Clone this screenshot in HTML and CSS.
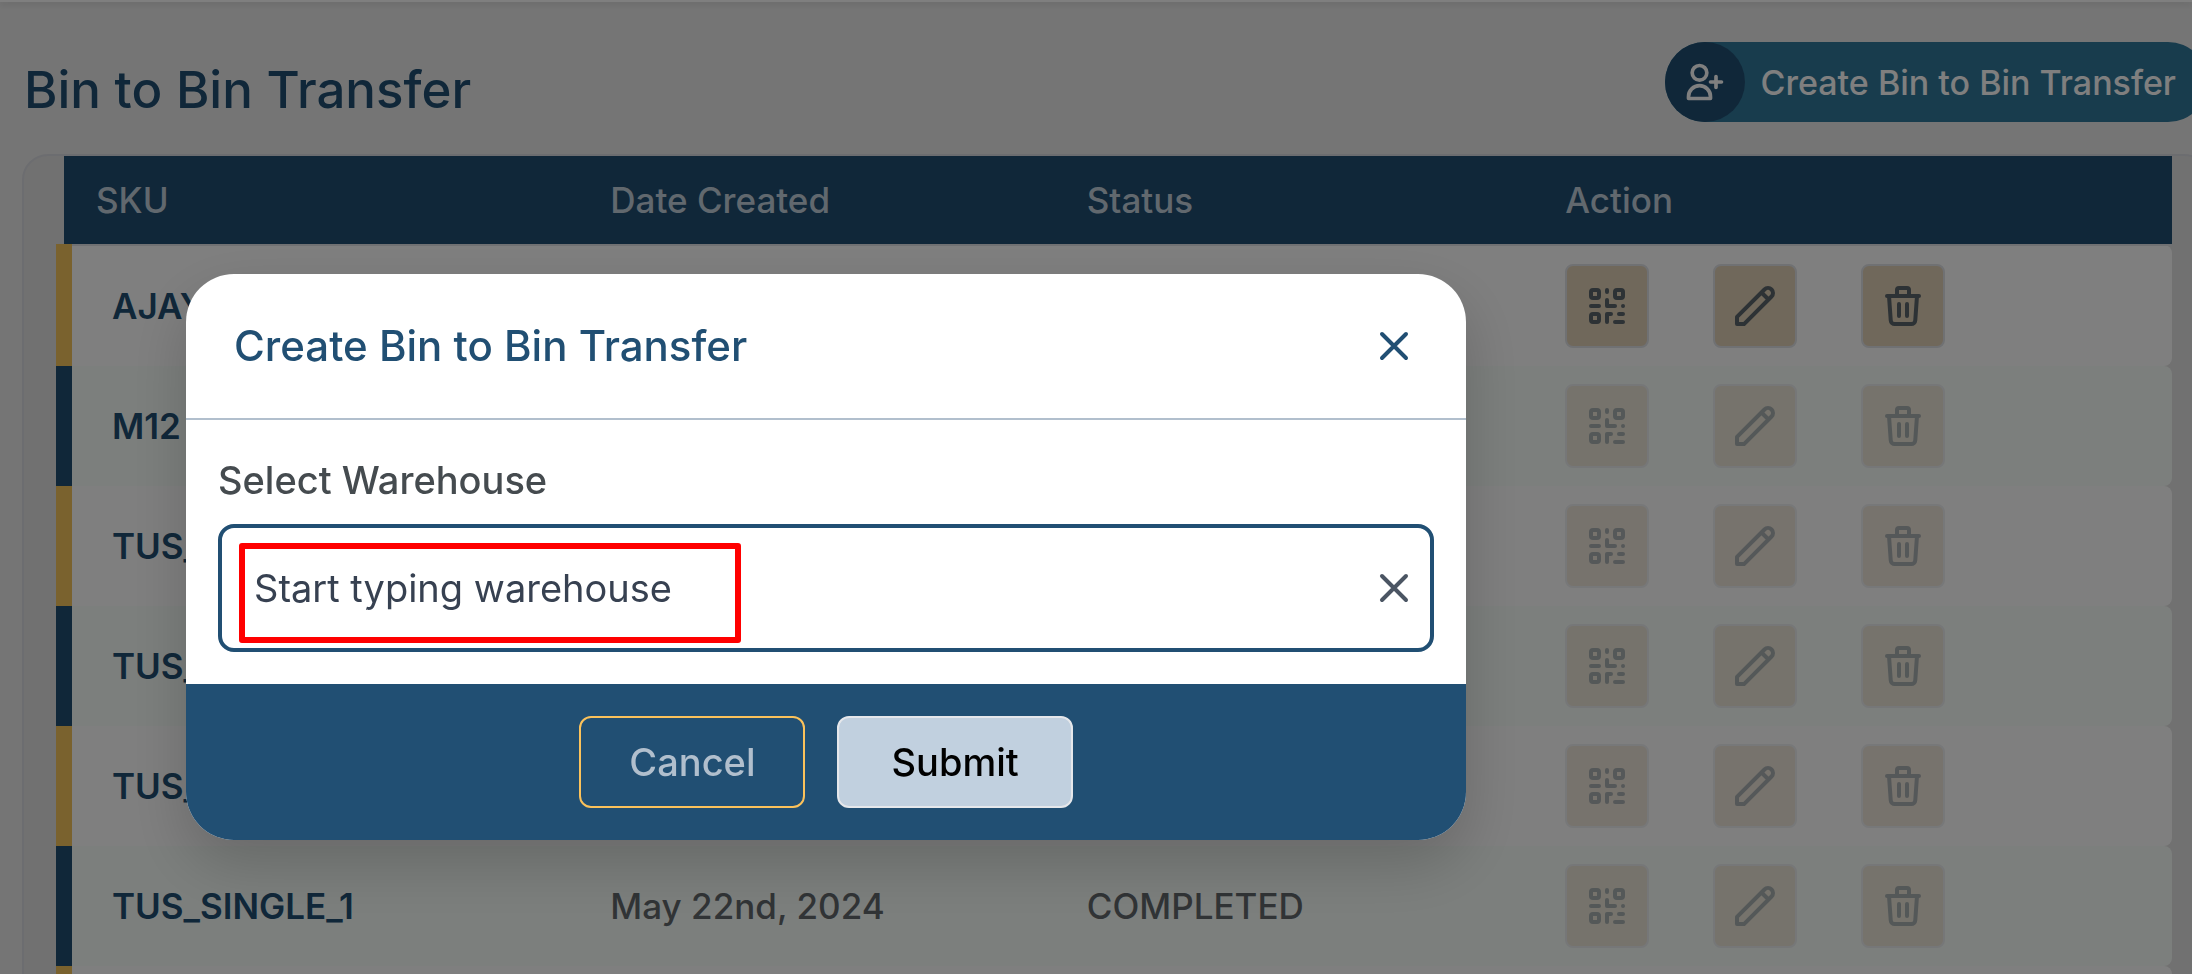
FILE: index.html
```
<!DOCTYPE html>
<html lang="en">

<head>
  <meta charset="UTF-8">
  <meta name="viewport" content="width=device-width, initial-scale=1.0">
  <title>Bin to Bin Transfer</title>
  <link rel="stylesheet" href="styles.css">
</head>

<body>

  <!-- icon set -->
  <svg class="sprite" aria-hidden="true">
    <symbol id="qr" viewBox="0 0 24 24">
      <path d="M12 4v1m6 11h2m-6 0h-2v4m0-11v3m0 0h.01M12 12h4.01M16 20h4M4 12h4m12 0h.01M5 8h2a1 1 0 001-1V5a1 1 0 00-1-1H5a1 1 0 00-1 1v2a1 1 0 001 1zm12 0h2a1 1 0 001-1V5a1 1 0 00-1-1h-2a1 1 0 00-1 1v2a1 1 0 001 1zM5 20h2a1 1 0 001-1v-2a1 1 0 00-1-1H5a1 1 0 00-1 1v2a1 1 0 001 1z" />
    </symbol>
    <symbol id="pencil" viewBox="0 0 24 24">
      <path d="M15.232 5.232l3.536 3.536m-2.036-5.036a2.5 2.5 0 113.536 3.536L6.5 21.036H3v-3.572L16.732 3.732z" />
    </symbol>
    <symbol id="trash" viewBox="0 0 24 24">
      <path d="M19 7l-.867 12.142A2 2 0 0116.138 21H7.862a2 2 0 01-1.995-1.858L5 7m5 4v6m4-6v6m1-10V4a1 1 0 00-1-1h-4a1 1 0 00-1 1v3M4 7h16" />
    </symbol>
    <symbol id="close" viewBox="0 0 24 24">
      <path d="M6 18L18 6M6 6l12 12" />
    </symbol>
  </svg>

  <div class="topbar"></div>

  <main class="content">
    <div class="page-head">
      <h1>Bin to Bin Transfer</h1>
      <button class="create" type="button">
        <span class="create-icon">
          <svg viewBox="0 0 24 24"><path d="M18 9v3m0 0v3m0-3h3m-3 0h-3m-2-5a4 4 0 11-8 0 4 4 0 018 0zM3 20a6 6 0 0112 0v1H3v-1z" /></svg>
        </span>
        Create Bin to Bin Transfer
      </button>
    </div>

    <div class="card">
      <table>
        <colgroup>
          <col class="col-sku">
          <col class="col-date">
          <col class="col-status">
          <col>
        </colgroup>
        <thead>
          <tr>
            <th>SKU</th>
            <th>Date Created</th>
            <th>Status</th>
            <th>Action</th>
          </tr>
        </thead>
        <tbody>
          <tr>
            <td class="sku">AJAY</td>
            <td></td>
            <td></td>
            <td>
              <div class="actions">
                <button type="button" aria-label="QR code"><svg><use href="#qr" /></svg></button>
                <button type="button" aria-label="Edit"><svg><use href="#pencil" /></svg></button>
                <button type="button" aria-label="Delete"><svg><use href="#trash" /></svg></button>
              </div>
            </td>
          </tr>
          <tr>
            <td class="sku">M12</td>
            <td></td>
            <td></td>
            <td>
              <div class="actions">
                <button type="button" aria-label="QR code" disabled><svg><use href="#qr" /></svg></button>
                <button type="button" aria-label="Edit" disabled><svg><use href="#pencil" /></svg></button>
                <button type="button" aria-label="Delete" disabled><svg><use href="#trash" /></svg></button>
              </div>
            </td>
          </tr>
          <tr>
            <td class="sku">TUS_</td>
            <td></td>
            <td></td>
            <td>
              <div class="actions">
                <button type="button" aria-label="QR code" disabled><svg><use href="#qr" /></svg></button>
                <button type="button" aria-label="Edit" disabled><svg><use href="#pencil" /></svg></button>
                <button type="button" aria-label="Delete" disabled><svg><use href="#trash" /></svg></button>
              </div>
            </td>
          </tr>
          <tr>
            <td class="sku">TUS_</td>
            <td></td>
            <td></td>
            <td>
              <div class="actions">
                <button type="button" aria-label="QR code" disabled><svg><use href="#qr" /></svg></button>
                <button type="button" aria-label="Edit" disabled><svg><use href="#pencil" /></svg></button>
                <button type="button" aria-label="Delete" disabled><svg><use href="#trash" /></svg></button>
              </div>
            </td>
          </tr>
          <tr>
            <td class="sku">TUS_</td>
            <td></td>
            <td></td>
            <td>
              <div class="actions">
                <button type="button" aria-label="QR code" disabled><svg><use href="#qr" /></svg></button>
                <button type="button" aria-label="Edit" disabled><svg><use href="#pencil" /></svg></button>
                <button type="button" aria-label="Delete" disabled><svg><use href="#trash" /></svg></button>
              </div>
            </td>
          </tr>
          <tr>
            <td class="sku">TUS_SINGLE_1</td>
            <td>May 22nd, 2024</td>
            <td>COMPLETED</td>
            <td>
              <div class="actions">
                <button type="button" aria-label="QR code" disabled><svg><use href="#qr" /></svg></button>
                <button type="button" aria-label="Edit" disabled><svg><use href="#pencil" /></svg></button>
                <button type="button" aria-label="Delete" disabled><svg><use href="#trash" /></svg></button>
              </div>
            </td>
          </tr>
          <tr>
            <td></td>
            <td></td>
            <td></td>
            <td></td>
          </tr>
        </tbody>
      </table>
    </div>
  </main>

  <!-- create dialog -->
  <div class="overlay">
    <form class="modal" role="dialog" aria-labelledby="modal-title">
      <div class="modal-head">
        <h2 id="modal-title">Create Bin to Bin Transfer</h2>
        <button type="button" aria-label="Close"><svg><use href="#close" /></svg></button>
      </div>
      <div class="modal-body">
        <label for="warehouse">Select Warehouse</label>
        <div class="field">
          <input id="warehouse" type="text" placeholder="Start typing warehouse">
          <button class="clear" type="button" aria-label="Clear"><svg><use href="#close" /></svg></button>
          <span class="highlight"></span>
        </div>
      </div>
      <div class="modal-foot">
        <button class="btn cancel" type="button">Cancel</button>
        <button class="btn submit" type="submit">Submit</button>
      </div>
    </form>
  </div>

</body>

</html>
```
FILE: styles.css
```
* {
  margin: 0;
  padding: 0;
  box-sizing: border-box;
}

html {
  overflow: hidden;
}

body {
  height: 100vh;
  overflow: hidden;
  background-color: #ebebeb;
  font-family: Inter, "Open Sans", sans-serif;
  font-weight: 500;
  color: #62686c;
}

button,
input {
  font: inherit;
  color: inherit;
}

button {
  border: none;
  background: none;
  cursor: pointer;
}

svg {
  display: block;
  width: 48px;
  height: 48px;
  fill: none;
  stroke: currentColor;
  stroke-width: 2;
  stroke-linecap: round;
  stroke-linejoin: round;
}

.sprite {
  display: none;
}

.topbar {
  height: 2px;
  background-color: #fff;
  box-shadow: 0 2px 6px rgba(0, 0, 0, .2);
}

/* the content runs a little past the right edge */
.content {
  margin: 40px -16px 0 24px;
}

.page-head {
  display: flex;
  justify-content: space-between;
  align-items: flex-end;
  margin-bottom: 32px;
}

h1 {
  font-size: 51px;
  line-height: 64px;
  font-weight: 500;
  color: #214f73;
}

.create {
  display: flex;
  align-items: center;
  gap: 16px;
  padding-right: 32px;
  border-radius: 40px;
  background-color: #30789a;
  font-size: 34px;
  color: #fff;
}

.create-icon {
  display: flex;
  align-items: center;
  justify-content: center;
  width: 80px;
  height: 80px;
  border-radius: 50%;
  background-color: #214f73;
}

.create-icon svg {
  width: 44px;
  height: 44px;
}

/* table card */
.card {
  margin: 0 -2px;
  padding: 0 36px 0 32px;
  border: 2px solid #d9dae0;
  border-radius: 26px;
  background-color: #e2e2e2;
}

table {
  width: 100%;
  table-layout: fixed;
  border-collapse: collapse;
  font-size: 35px;
  line-height: 48px;
  text-align: left;
  white-space: nowrap;
}

.col-sku {
  width: 24.4%;
}

.col-date {
  width: 22.6%;
}

.col-status {
  width: 22.7%;
}

thead tr {
  background-color: #214f73;
}

th {
  height: 89px;
  padding: 0 32px;
  font-weight: 500;
  color: #c3d1dd;
}

tbody tr {
  border-left: 16px solid #214f73;
}

tbody tr:nth-child(odd) {
  border-left-color: #f4c45c;
}

tbody tr:first-child {
  border-top: 2px solid #e0e2e6;
}

td {
  height: 120px;
  padding: 18px 32px;
  background-color: #f9fefb;
}

tr:nth-child(odd) td {
  background-color: #fff;
}

td:last-child {
  border-radius: 0 8px 8px 0;
}

td.sku {
  padding-left: 40px;
  font-weight: 600;
  color: #214f73;
}

.actions {
  display: flex;
  gap: 64px;
}

.actions button {
  padding: 16px;
  border: 2px solid #e0e2e6;
  border-radius: 8px;
  background-color: #e0d0b6;
  color: #5a646a;
}

.actions button:disabled {
  opacity: .5;
  cursor: default;
}

/* modal */
.overlay {
  position: fixed;
  inset: 0;
  padding: 274px 186px 0;
  background-color: rgba(0, 0, 0, .5);
}

.modal {
  max-width: 1280px;
  border-radius: 48px;
  overflow: hidden;
  background-color: #fff;
  box-shadow: 0 24px 60px rgba(0, 0, 0, .18);
}

.modal-head {
  display: flex;
  align-items: center;
  justify-content: space-between;
  padding: 48px;
  border-bottom: 2px solid #b1bfcd;
  color: #214f73;
}

h2 {
  font-size: 42px;
  line-height: 48px;
  font-weight: 500;
}

.modal-body {
  padding: 32px;
}

label {
  display: block;
  margin-bottom: 16px;
  font-size: 38px;
  line-height: 56px;
  color: #454b4f;
}

.field {
  position: relative;
  display: flex;
  align-items: center;
  height: 128px;
  padding: 0 12px 0 32px;
  border: 4px solid #214f73;
  border-radius: 16px;
}

.field input {
  flex: 1;
  border: none;
  outline: none;
  background: none;
  font-size: 38px;
  font-weight: 400;
  color: #374151;
}

.field input::placeholder {
  color: #374151;
  opacity: 1;
}

.clear {
  color: #4b5563;
}

.highlight {
  position: absolute;
  top: 15px;
  left: 17px;
  width: 502px;
  height: 100px;
  border: 6px solid #f00;
  border-radius: 3px;
  pointer-events: none;
}

.modal-foot {
  display: flex;
  justify-content: center;
  gap: 32px;
  padding: 32px;
  background-color: #214f73;
}

.btn {
  padding: 20px 48px;
  border: 2px solid;
  border-radius: 12px;
  font-size: 38px;
  line-height: 48px;
}

.cancel {
  border-color: #fbc25b;
  color: #b1bfcd;
}

.submit {
  padding: 20px 52px;
  border-color: #e5e7eb;
  background-color: #c1d0df;
  color: #000;
}
```
